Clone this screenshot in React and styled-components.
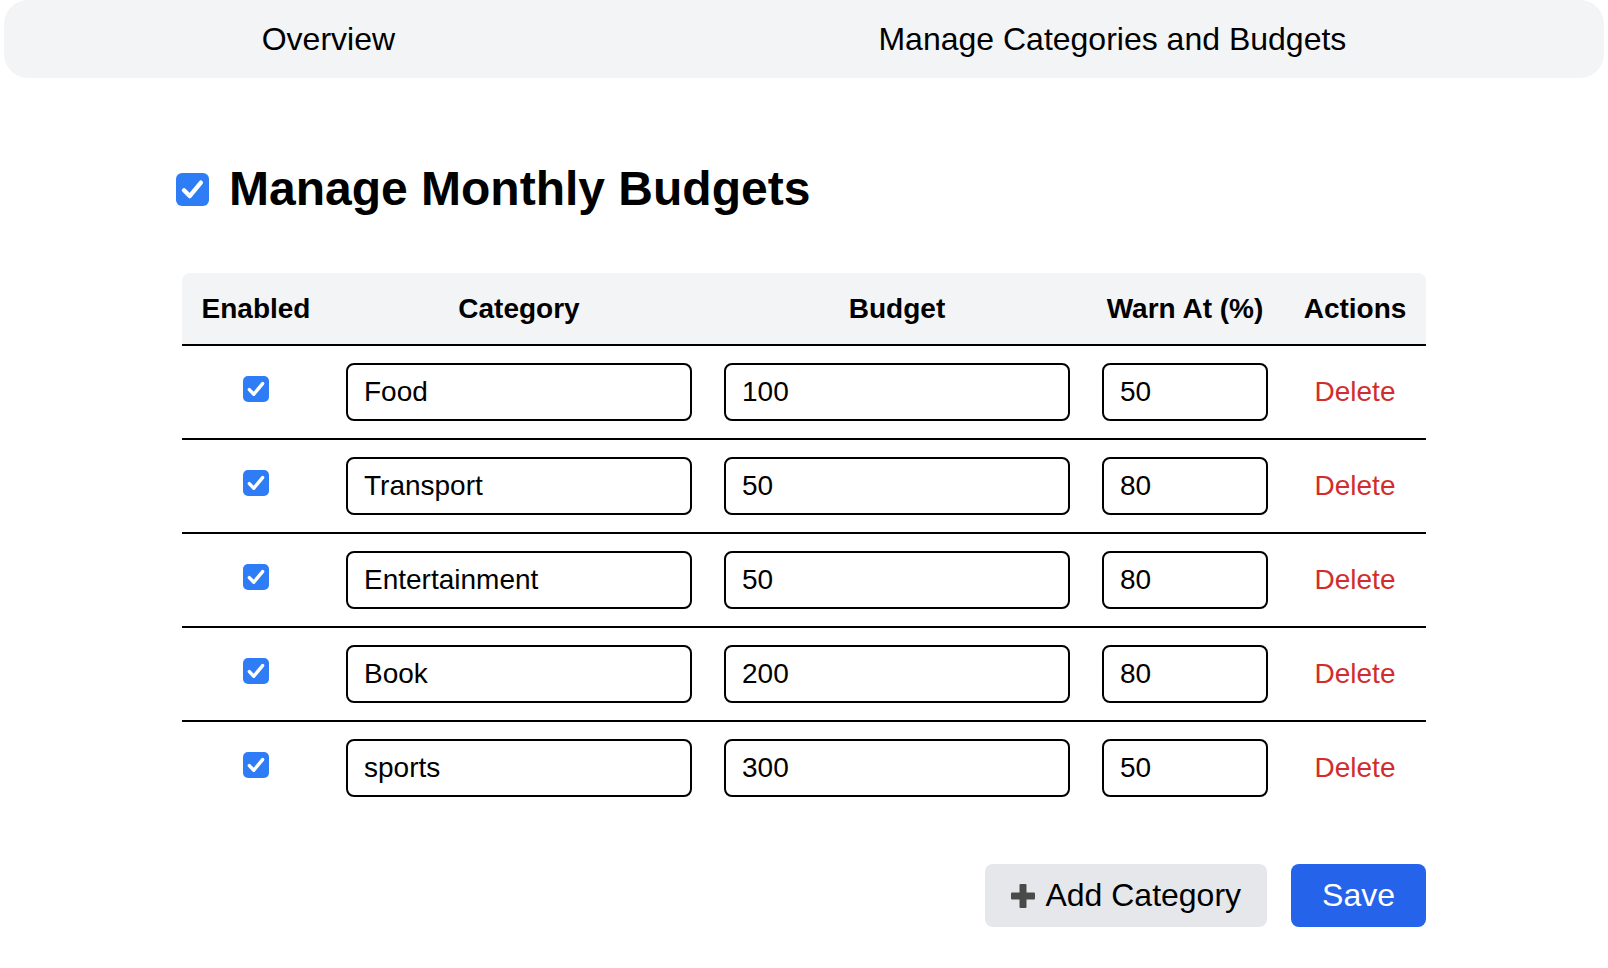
import React, { useState } from "react";
import styled, { createGlobalStyle } from "styled-components";

const GlobalStyle = createGlobalStyle`
  html, body { margin: 0; padding: 0; background: #ffffff; }
  body { font-family: "Liberation Sans", Arial, Helvetica, sans-serif; color: #000; }
  * { box-sizing: border-box; }
`;

const TabBar = styled.nav`
  display: flex;
  align-items: center;
  height: 78px;
  margin: 0 4px;
  padding: 0 16px;
  background: #f3f4f6;
  border-radius: 24px;
`;

const Tab = styled.button`
  flex: 1 1 auto;
  border: none;
  background: transparent;
  font-family: inherit;
  font-size: 32px;
  color: #000;
  padding: 0 8px;
  height: 100%;
  text-align: center;
  cursor: pointer;
`;

const Container = styled.main`
  width: 1244px;
  margin: 0 auto;
`;

const HeadingRow = styled.div`
  display: flex;
  align-items: center;
  gap: 20px;
  height: 56px;
  margin: 83px 0 56px -6px;
`;

const Title = styled.h1`
  margin: 0;
  font-size: 48px;
  font-weight: 700;
  line-height: 56px;
`;

const Box = styled.span`
  display: inline-flex;
  align-items: center;
  justify-content: center;
  flex: none;
  width: ${(p) => p.$size}px;
  height: ${(p) => p.$size}px;
  border-radius: ${(p) => Math.round(p.$size / 5.5)}px;
  background: #2f7df6;
  cursor: pointer;
  svg { display: block; }
`;

function Check({ size = 26, checked, onToggle }) {
  return (
    <Box $size={size} role="checkbox" aria-checked={checked} onClick={onToggle}>
      {checked && (
        <svg width={size} height={size} viewBox="0 0 26 26">
          <path
            d="M6.3 13.6 L10.8 18.2 L19.6 7.6"
            fill="none"
            stroke="#fff"
            strokeWidth="3.4"
            strokeLinecap="round"
            strokeLinejoin="round"
          />
        </svg>
      )}
    </Box>
  );
}

const Table = styled.table`
  width: 1244px;
  table-layout: fixed;
  border-collapse: separate;
  border-spacing: 0;
`;

const HeadCell = styled.th`
  height: 73px;
  padding: 0 8px;
  background: #f3f4f6;
  border-bottom: 2px solid #000;
  font-size: 28px;
  font-weight: 700;
  text-align: center;
  white-space: nowrap;
  &:first-child { border-top-left-radius: 8px; }
  &:last-child { border-top-right-radius: 8px; }
`;

const Row = styled.tr`
  &:last-child td { border-bottom: none; height: 92px; }
`;

const Cell = styled.td`
  height: 94px;
  padding: 0 16px;
  border-bottom: 2px solid #000;
  text-align: center;
  vertical-align: middle;
`;

const CheckWrap = styled.div`
  display: flex;
  justify-content: center;
  margin-bottom: 6px;
`;

const TextInput = styled.input`
  display: block;
  width: 100%;
  height: 58px;
  padding: 0 16px;
  border: 2px solid #000;
  border-radius: 8px;
  font-family: inherit;
  font-size: 28px;
  color: #000;
  background: #fff;
  outline: none;
`;

const DeleteLink = styled.button`
  border: none;
  background: transparent;
  padding: 0;
  font-family: inherit;
  font-size: 28px;
  color: #d22d2d;
  cursor: pointer;
`;

const Actions = styled.div`
  display: flex;
  justify-content: flex-end;
  gap: 24px;
  margin-top: 50px;
`;

const Button = styled.button`
  display: inline-flex;
  align-items: center;
  gap: 10px;
  height: 63px;
  padding: 0 ${(p) => (p.$primary ? 31 : 26)}px;
  border: none;
  border-radius: 8px;
  background: ${(p) => (p.$primary ? "#2563eb" : "#e5e7eb")};
  color: ${(p) => (p.$primary ? "#fff" : "#000")};
  font-family: inherit;
  font-size: 32px;
  cursor: pointer;
`;

const PlusIcon = () => (
  <svg width="24" height="24" viewBox="0 0 24 24" aria-hidden="true">
    <rect x="8.5" y="0" width="7" height="24" rx="1" fill="#4a4a4a" />
    <rect x="0" y="8.5" width="24" height="7" rx="1" fill="#4a4a4a" />
  </svg>
);

const initial = [
  { name: "Food", budget: "100", warn: "50" },
  { name: "Transport", budget: "50", warn: "80" },
  { name: "Entertainment", budget: "50", warn: "80" },
  { name: "Book", budget: "200", warn: "80" },
  { name: "sports", budget: "300", warn: "50" },
].map((r) => ({ ...r, enabled: true }));

export default function App() {
  const [rows, setRows] = useState(initial);
  const [managed, setManaged] = useState(true);

  const update = (i, key, value) =>
    setRows((rs) => rs.map((r, j) => (j === i ? { ...r, [key]: value } : r)));

  return (
    <>
      <GlobalStyle />
      <TabBar>
        <Tab>Overview</Tab>
        <Tab>Manage Categories and Budgets</Tab>
      </TabBar>
      <Container>
        <HeadingRow>
          <Check size={33} checked={managed} onToggle={() => setManaged(!managed)} />
          <Title>Manage Monthly Budgets</Title>
        </HeadingRow>
        <Table>
          <colgroup>
            <col style={{ width: 148 }} />
            <col style={{ width: 378 }} />
            <col style={{ width: 378 }} />
            <col style={{ width: 198 }} />
            <col style={{ width: 142 }} />
          </colgroup>
          <thead>
            <tr>
              <HeadCell>Enabled</HeadCell>
              <HeadCell>Category</HeadCell>
              <HeadCell>Budget</HeadCell>
              <HeadCell>Warn At (%)</HeadCell>
              <HeadCell>Actions</HeadCell>
            </tr>
          </thead>
          <tbody>
            {rows.map((r, i) => (
              <Row key={i}>
                <Cell>
                  <CheckWrap>
                    <Check checked={r.enabled} onToggle={() => update(i, "enabled", !r.enabled)} />
                  </CheckWrap>
                </Cell>
                <Cell>
                  <TextInput value={r.name} onChange={(e) => update(i, "name", e.target.value)} />
                </Cell>
                <Cell>
                  <TextInput value={r.budget} onChange={(e) => update(i, "budget", e.target.value)} />
                </Cell>
                <Cell>
                  <TextInput value={r.warn} onChange={(e) => update(i, "warn", e.target.value)} />
                </Cell>
                <Cell>
                  <DeleteLink onClick={() => setRows((rs) => rs.filter((_, j) => j !== i))}>Delete</DeleteLink>
                </Cell>
              </Row>
            ))}
          </tbody>
        </Table>
        <Actions>
          <Button
            onClick={() =>
              setRows((rs) => [...rs, { name: "", budget: "", warn: "80", enabled: true }])
            }
          >
            <PlusIcon />
            Add Category
          </Button>
          <Button $primary>Save</Button>
        </Actions>
      </Container>
    </>
  );
}
